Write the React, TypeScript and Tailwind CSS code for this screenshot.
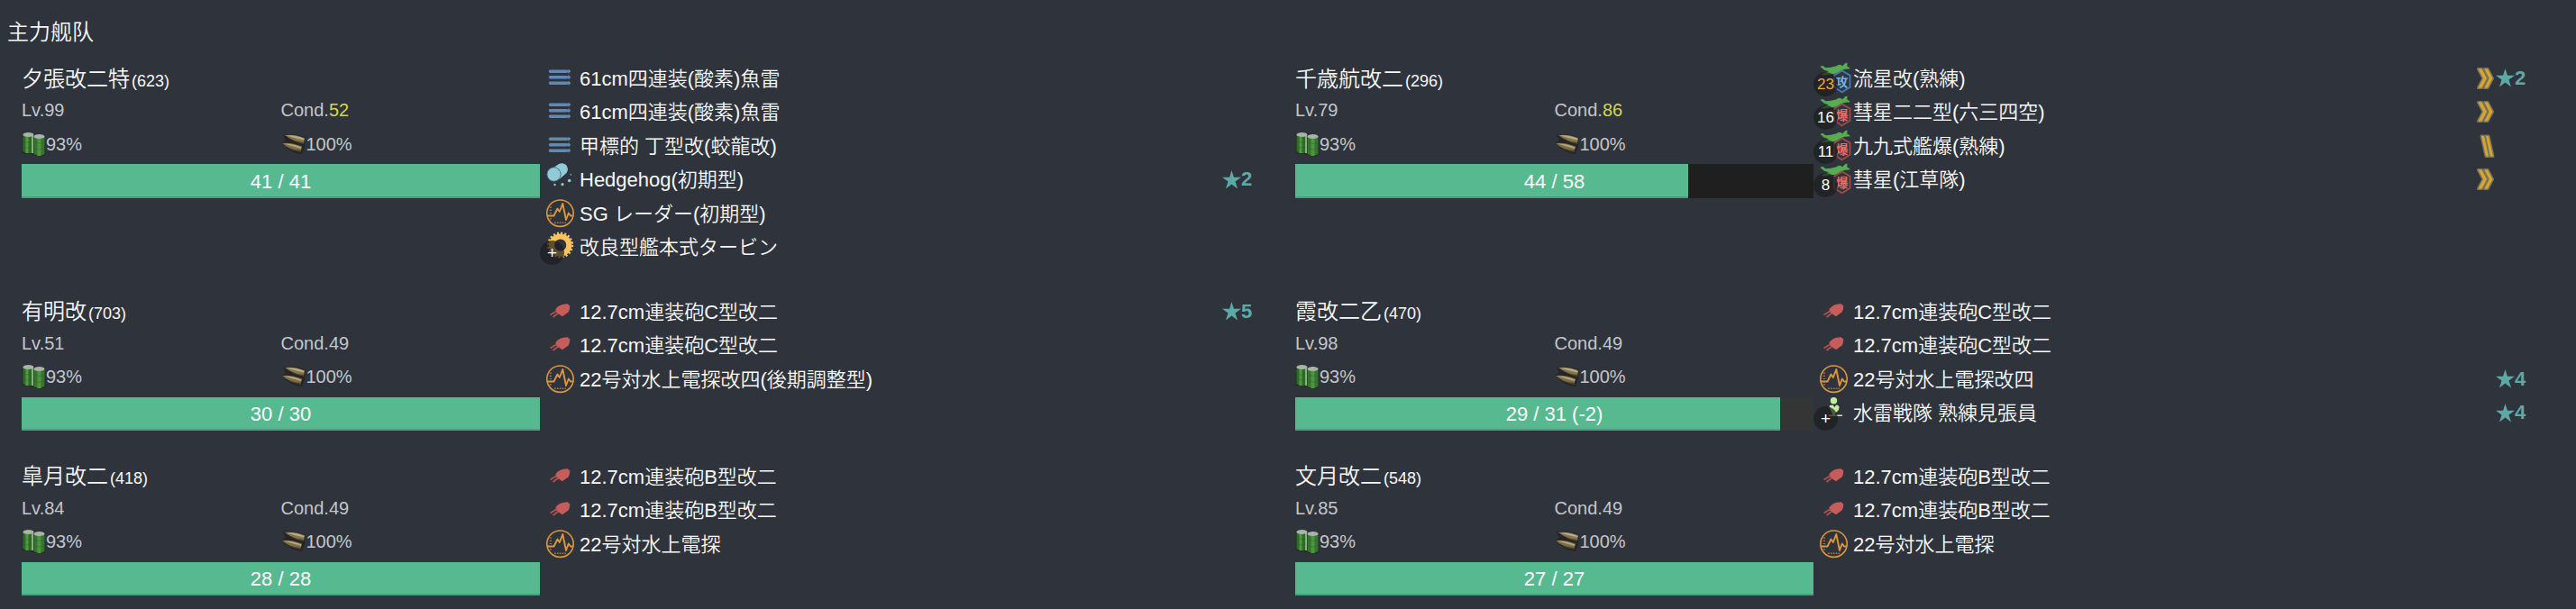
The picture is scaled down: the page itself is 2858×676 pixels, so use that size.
import React from "react";

type IconKind = "torpedo" | "asw" | "radar" | "engine" | "gun" | "lookout" | "attack" | "bomber";
type Equip = {
  name: string;
  icon: IconKind;
  badge?: string;
  gold?: boolean;
  rank?: "double" | "bars";
  star?: number;
};
type Ship = {
  name: string;
  id: number;
  lv: number;
  cond: number;
  hp: number;
  max: number;
  note?: string;
  shadow?: boolean;
  equips: Equip[];
};

const gunC: Equip = { name: "12.7cm連装砲C型改二", icon: "gun" };
const gunB: Equip = { name: "12.7cm連装砲B型改二", icon: "gun" };

const ships: Ship[] = [
  {
    name: "夕張改二特", id: 623, lv: 99, cond: 52, hp: 41, max: 41,
    equips: [
      { name: "61cm四連装(酸素)魚雷", icon: "torpedo" },
      { name: "61cm四連装(酸素)魚雷", icon: "torpedo" },
      { name: "甲標的 丁型改(蛟龍改)", icon: "torpedo" },
      { name: "Hedgehog(初期型)", icon: "asw", star: 2 },
      { name: "SG レーダー(初期型)", icon: "radar" },
      { name: "改良型艦本式タービン", icon: "engine", badge: "+" },
    ],
  },
  {
    name: "千歳航改二", id: 296, lv: 79, cond: 86, hp: 44, max: 58,
    equips: [
      { name: "流星改(熟練)", icon: "attack", badge: "23", gold: true, rank: "double", star: 2 },
      { name: "彗星二二型(六三四空)", icon: "bomber", badge: "16", rank: "double" },
      { name: "九九式艦爆(熟練)", icon: "bomber", badge: "11", rank: "bars" },
      { name: "彗星(江草隊)", icon: "bomber", badge: "8", rank: "double" },
    ],
  },
  {
    name: "有明改", id: 703, lv: 51, cond: 49, hp: 30, max: 30,
    equips: [{ ...gunC, star: 5 }, gunC, { name: "22号対水上電探改四(後期調整型)", icon: "radar" }],
  },
  {
    name: "霞改二乙", id: 470, lv: 98, cond: 49, hp: 29, max: 31, note: " (-2)", shadow: true,
    equips: [
      gunC,
      gunC,
      { name: "22号対水上電探改四", icon: "radar", star: 4 },
      { name: "水雷戦隊 熟練見張員", icon: "lookout", badge: "+", star: 4 },
    ],
  },
  {
    name: "皐月改二", id: 418, lv: 84, cond: 49, hp: 28, max: 28,
    equips: [gunB, gunB, { name: "22号対水上電探", icon: "radar" }],
  },
  {
    name: "文月改二", id: 548, lv: 85, cond: 49, hp: 27, max: 27,
    equips: [gunB, gunB, { name: "22号対水上電探", icon: "radar" }],
  },
];

function FuelIcon() {
  return (
    <svg viewBox="0 0 26 28" className="h-7 w-[27px] shrink-0">
      <path d="M0 3 Q6 -1 13 2 L25 4 L26 26 Q20 29 13 26 L0 24Z" fill="#23281f" opacity=".75" />
      <path d="M1 4 L12 4 V23 Q6 26 1 22Z" fill="#2f6b28" />
      <path d="M4 5 h3 v19 h-3z" fill="#4f9a41" />
      <path d="M10.500 4 h2 v20 h-2z" fill="#88b07c" />
      <ellipse cx="7" cy="3.500" rx="6" ry="2.500" fill="#a9b3aa" />
      <path d="M13 6 H25 V25 Q19 28 13 25Z" fill="#35752d" />
      <path d="M17 7 h4 v20 h-4z" fill="#4f9440" />
      <path d="M13 12.500 q6 2 12 0 M13 19 q6 2 12 0 M1 11 q5 2 10 0 M1 17 q5 2 10 0" stroke="#2f6529" fill="none" strokeWidth=".5" />
      <ellipse cx="19" cy="5.500" rx="6" ry="2.600" fill="#a9b3aa" />
    </svg>
  );
}

function AmmoIcon() {
  return (
    <svg viewBox="0 0 28 28" className="h-7 w-7 shrink-0">
      <path d="M2 4 Q10 1 27 6 L26 17 L23 25 Q12 25 0 13 L5 10Z" fill="#1f1d19" opacity=".6" />
      <path d="M4 4 Q14 2.500 26 7 L25 13.500 Q12 10.500 4 4Z" fill="#84754f" />
      <path d="M6 4.500 Q15 3.500 25.500 8 L25 9.500 Q14 7 6 4.500Z" fill="#b9ac84" />
      <path d="M9 7.500 Q17 11.500 25 12 L24.800 14 Q15 12 9 7.500Z" fill="#4e4228" />
      <path d="M1 13 Q11 11.500 23 16.500 L21.500 22.500 Q9 20.500 1 13Z" fill="#7c6d48" />
      <path d="M3 13.500 Q12 13 22.500 17.500 L22 19 Q11 16 3 13.500Z" fill="#b5a87f" />
      <path d="M6 17 Q13 20.500 22 21 L21.500 23 Q12 21.500 6 17Z" fill="#4a3e25" />
    </svg>
  );
}

function EquipIcon({ kind }: { kind: IconKind }) {
  if (kind === "attack" || kind === "bomber") {
    const red = kind === "bomber";
    return (
      <svg viewBox="0 0 38 38" className="h-[38px] w-[38px] overflow-visible">
        <path
          d="M4.500 6 L7 4.800 L10.500 7.200 L16 6.800 L22 5.500 L25 3.800 L28 4.200 L29 5.500 L32 2.200 L34.500 1.500 L34.300 5.500 L37.500 7.500 L37 8.600 L32 8.800 L27 10.500 L23 13.500 L16 14.500 L8 15.500 L5.500 14.500 L14 11.200 L9 9.800Z"
          fill="#57ab50"
        />
        <path d="M28.700 10.500 L37.500 15.600 V28.800 L28.700 34.300 L19.900 28.800 V15.600Z" fill="#303640" stroke={red ? "#984a48" : "#4377b3"} strokeWidth="1.900" />
        <text x="28.500" y="27.600" fontSize="13.500" fontWeight="700" textAnchor="middle" fill={red ? "#ea6c6a" : "#6fb0f0"} fontFamily="'Noto Sans CJK JP', sans-serif">
          {red ? "爆" : "攻"}
        </text>
      </svg>
    );
  }
  return (
    <svg viewBox="0 0 38 38" className="h-[38px] w-[38px] overflow-visible">
      {kind === "torpedo" && (
        <g fill="#6389b3">
          {[9.5, 16, 22.5].map((y) => (
            <g key={y}>
              <path d={`M8 ${y} H26 L31 ${y + 0.8} V${y + 2.6} L26 ${y + 3.4} H8 Q5.500 ${y + 1.7} 8 ${y}Z`} />
              <rect x="28.300" y={y - 0.4} width="1.400" height="4.200" />
            </g>
          ))}
        </g>
      )}
      {kind === "asw" && (
        <g fill="#92cbd8">
          <path d="M7 9.500 L18 2 Q22.500 0 26 3 Q29.500 7.500 26.500 12 L18 19.500Z" />
          <ellipse cx="12.500" cy="13.500" rx="7.600" ry="7.800" stroke="#3f6069" strokeWidth=".9" />
          <circle cx="29.700" cy="20.500" r="1.800" />
          <circle cx="22" cy="24.700" r="1.600" />
          <circle cx="13.500" cy="25" r="1.200" />
          <circle cx="31.300" cy="13.700" r=".8" />
        </g>
      )}
      {kind === "radar" && (
        <g fill="none" stroke="#d9963f">
          <circle cx="19.500" cy="18.700" r="14.700" strokeWidth="1.600" />
          <path d="M5 21.500 H12.500 L16.500 13.500 L18.800 17 L22.300 8 L26 26 L28.800 18.500 L31 21.500 H34" strokeWidth="1.900" strokeLinejoin="round" />
          <path d="M8.800 11.500 V26" strokeWidth="2.400" strokeDasharray="1.200 2" opacity=".7" />
          <path d="M13 29.300 H26" strokeWidth="1.500" strokeDasharray="1.700 1.200" opacity=".7" />
        </g>
      )}
      {kind === "engine" && (
        <g fill="none" stroke="#f7c35e">
          <circle cx="19.700" cy="17" r="9.600" strokeWidth="6" />
          <circle cx="19.700" cy="17" r="13.200" strokeWidth="2.600" strokeDasharray="2.100 2.047" />
        </g>
      )}
      {kind === "gun" && (
        <g>
          <path d="M14.500 16 Q18.500 10.500 27.500 10.300 L30.300 12.500 Q30.300 17 28.500 19.500 L22 24.300 L17 21 L14.500 19Z" fill="#c65d5b" />
          <path d="M16 18 L8.500 22.500 M17.500 20.500 L11.500 25" stroke="#ad5150" strokeWidth="1.900" />
        </g>
      )}
      {kind === "lookout" && (
        <g fill="#c3eca0">
          <circle cx="19.500" cy="5.800" r="3.700" />
          <path d="M14.500 12.500 Q14.500 10.300 18.500 10.500 L20.500 13 L22 10.500 Q25.500 10.500 25.500 13 L25 16 L22 19 L20.500 21.500 H29 V23 H14 V21.500 L18.500 21.500Z" />
        </g>
      )}
    </svg>
  );
}

function RankIcon({ kind }: { kind: "double" | "bars" }) {
  const paths =
    kind === "double"
      ? ["M3.500 3.500 H7.500 L13 14 L7.500 24.500 H3.500 L9 14Z", "M10.500 3.500 H14 L19.500 14 L14 24.500 H10.500 L15.800 14Z"]
      : ["M7 3 H10 L15 25.500 H12Z", "M12 3 H15 L20 25.500 H17Z"];
  return (
    <svg viewBox="0 0 23 28" className="h-7 w-[23px]">
      <g stroke="#8d8b6c" strokeWidth="3" strokeLinejoin="round" opacity=".75">
        {paths.map((p) => <path key={p} d={p} />)}
      </g>
      <g fill="#d9a431">
        {paths.map((p) => <path key={p} d={p} />)}
      </g>
    </svg>
  );
}

function EquipRow({ e }: { e: Equip }) {
  return (
    <div className="flex h-[37.5px] items-center text-[22px] leading-none text-[#f6f7f9]">
      <div className="relative h-[38px] w-[41px] shrink-0">
        <EquipIcon kind={e.icon} />
        {e.badge && (
          <span
            className={`absolute -left-[3px] top-3 flex size-[27px] items-center justify-center rounded-full bg-[#1c1c1e]/70 ${e.badge === "+" ? "text-[19px]" : "text-[17px]"} ${e.gold ? "text-[#f0a732]" : "text-white"}`}
          >
            {e.badge}
          </span>
        )}
      </div>
      <span className="grow whitespace-pre pt-0.5 font-[350]">{e.name}</span>
      {e.rank && <RankIcon kind={e.rank} />}
      <span className="flex w-[34px] items-center font-bold text-[#5da9a5]">
        {e.star && (
          <>
            <svg viewBox="0 0 20 20" className="size-[21px] shrink-0">
              <path d="M10 0 L12.300 7.300 H20 L13.800 11.800 L16.200 19.500 L10 14.800 L3.800 19.500 L6.200 11.800 L0 7.300 H7.700Z" fill="currentColor" />
            </svg>
            {e.star}
          </>
        )}
      </span>
    </div>
  );
}

function ShipCard({ s }: { s: Ship }) {
  return (
    <section className="flex w-[1413px] pr-[47px]">
      <div className="w-[575px] shrink-0 text-xl leading-6 text-[#c3c6ca]">
        <h2 className="flex h-[39px] items-center text-2xl leading-none font-[350] text-[#f6f7f9]">
          <span>
            {s.name}
            <span className="ml-0.5 text-lg leading-none">({s.id})</span>
          </span>
        </h2>
        <div className="grid h-[30px] grid-cols-2 items-center">
          <span>Lv.{s.lv}</span>
          <span>
            Cond.<span className={s.cond > 49 ? "text-[#d5d450]" : ""}>{s.cond}</span>
          </span>
        </div>
        <div className="grid h-[45px] grid-cols-2 items-center">
          <span className="flex items-center">
            <FuelIcon />
            93%
          </span>
          <span className="flex items-center">
            <AmmoIcon />
            100%
          </span>
        </div>
        <div className={`grid h-[37.4px] ${s.shadow ? "bg-[#353535]" : "bg-[#1f1f1f]"}`}>
          <div className="col-start-1 row-start-1 border-b-2 border-[#48a07e] bg-[#56b990]" style={{ width: `${(s.hp / s.max) * 100}%` }} />
          <span className="col-start-1 row-start-1 self-center whitespace-pre pt-0.5 text-center text-[22px] text-white">
            {s.hp} / {s.max}
            {s.note}
          </span>
        </div>
      </div>
      <div className="grow pl-[3px]">
        {s.equips.map((e, i) => (
          <EquipRow key={i} e={e} />
        ))}
      </div>
    </section>
  );
}

export default function App() {
  return (
    <main className="h-[676px] w-[2858px] overflow-hidden bg-[#2f343c] font-['Liberation_Sans','Noto_Sans_CJK_JP',sans-serif]">
      <h1 className="flex h-[68.2px] items-center pl-2 pt-1 text-2xl leading-none font-[350] text-[#f6f7f9]">主力舰队</h1>
      <div className="grid grid-cols-[1413px_1413px] grid-rows-[258.6px_183px_160px] pl-6">
        {ships.map((s) => (
          <ShipCard key={s.id} s={s} />
        ))}
      </div>
    </main>
  );
}
